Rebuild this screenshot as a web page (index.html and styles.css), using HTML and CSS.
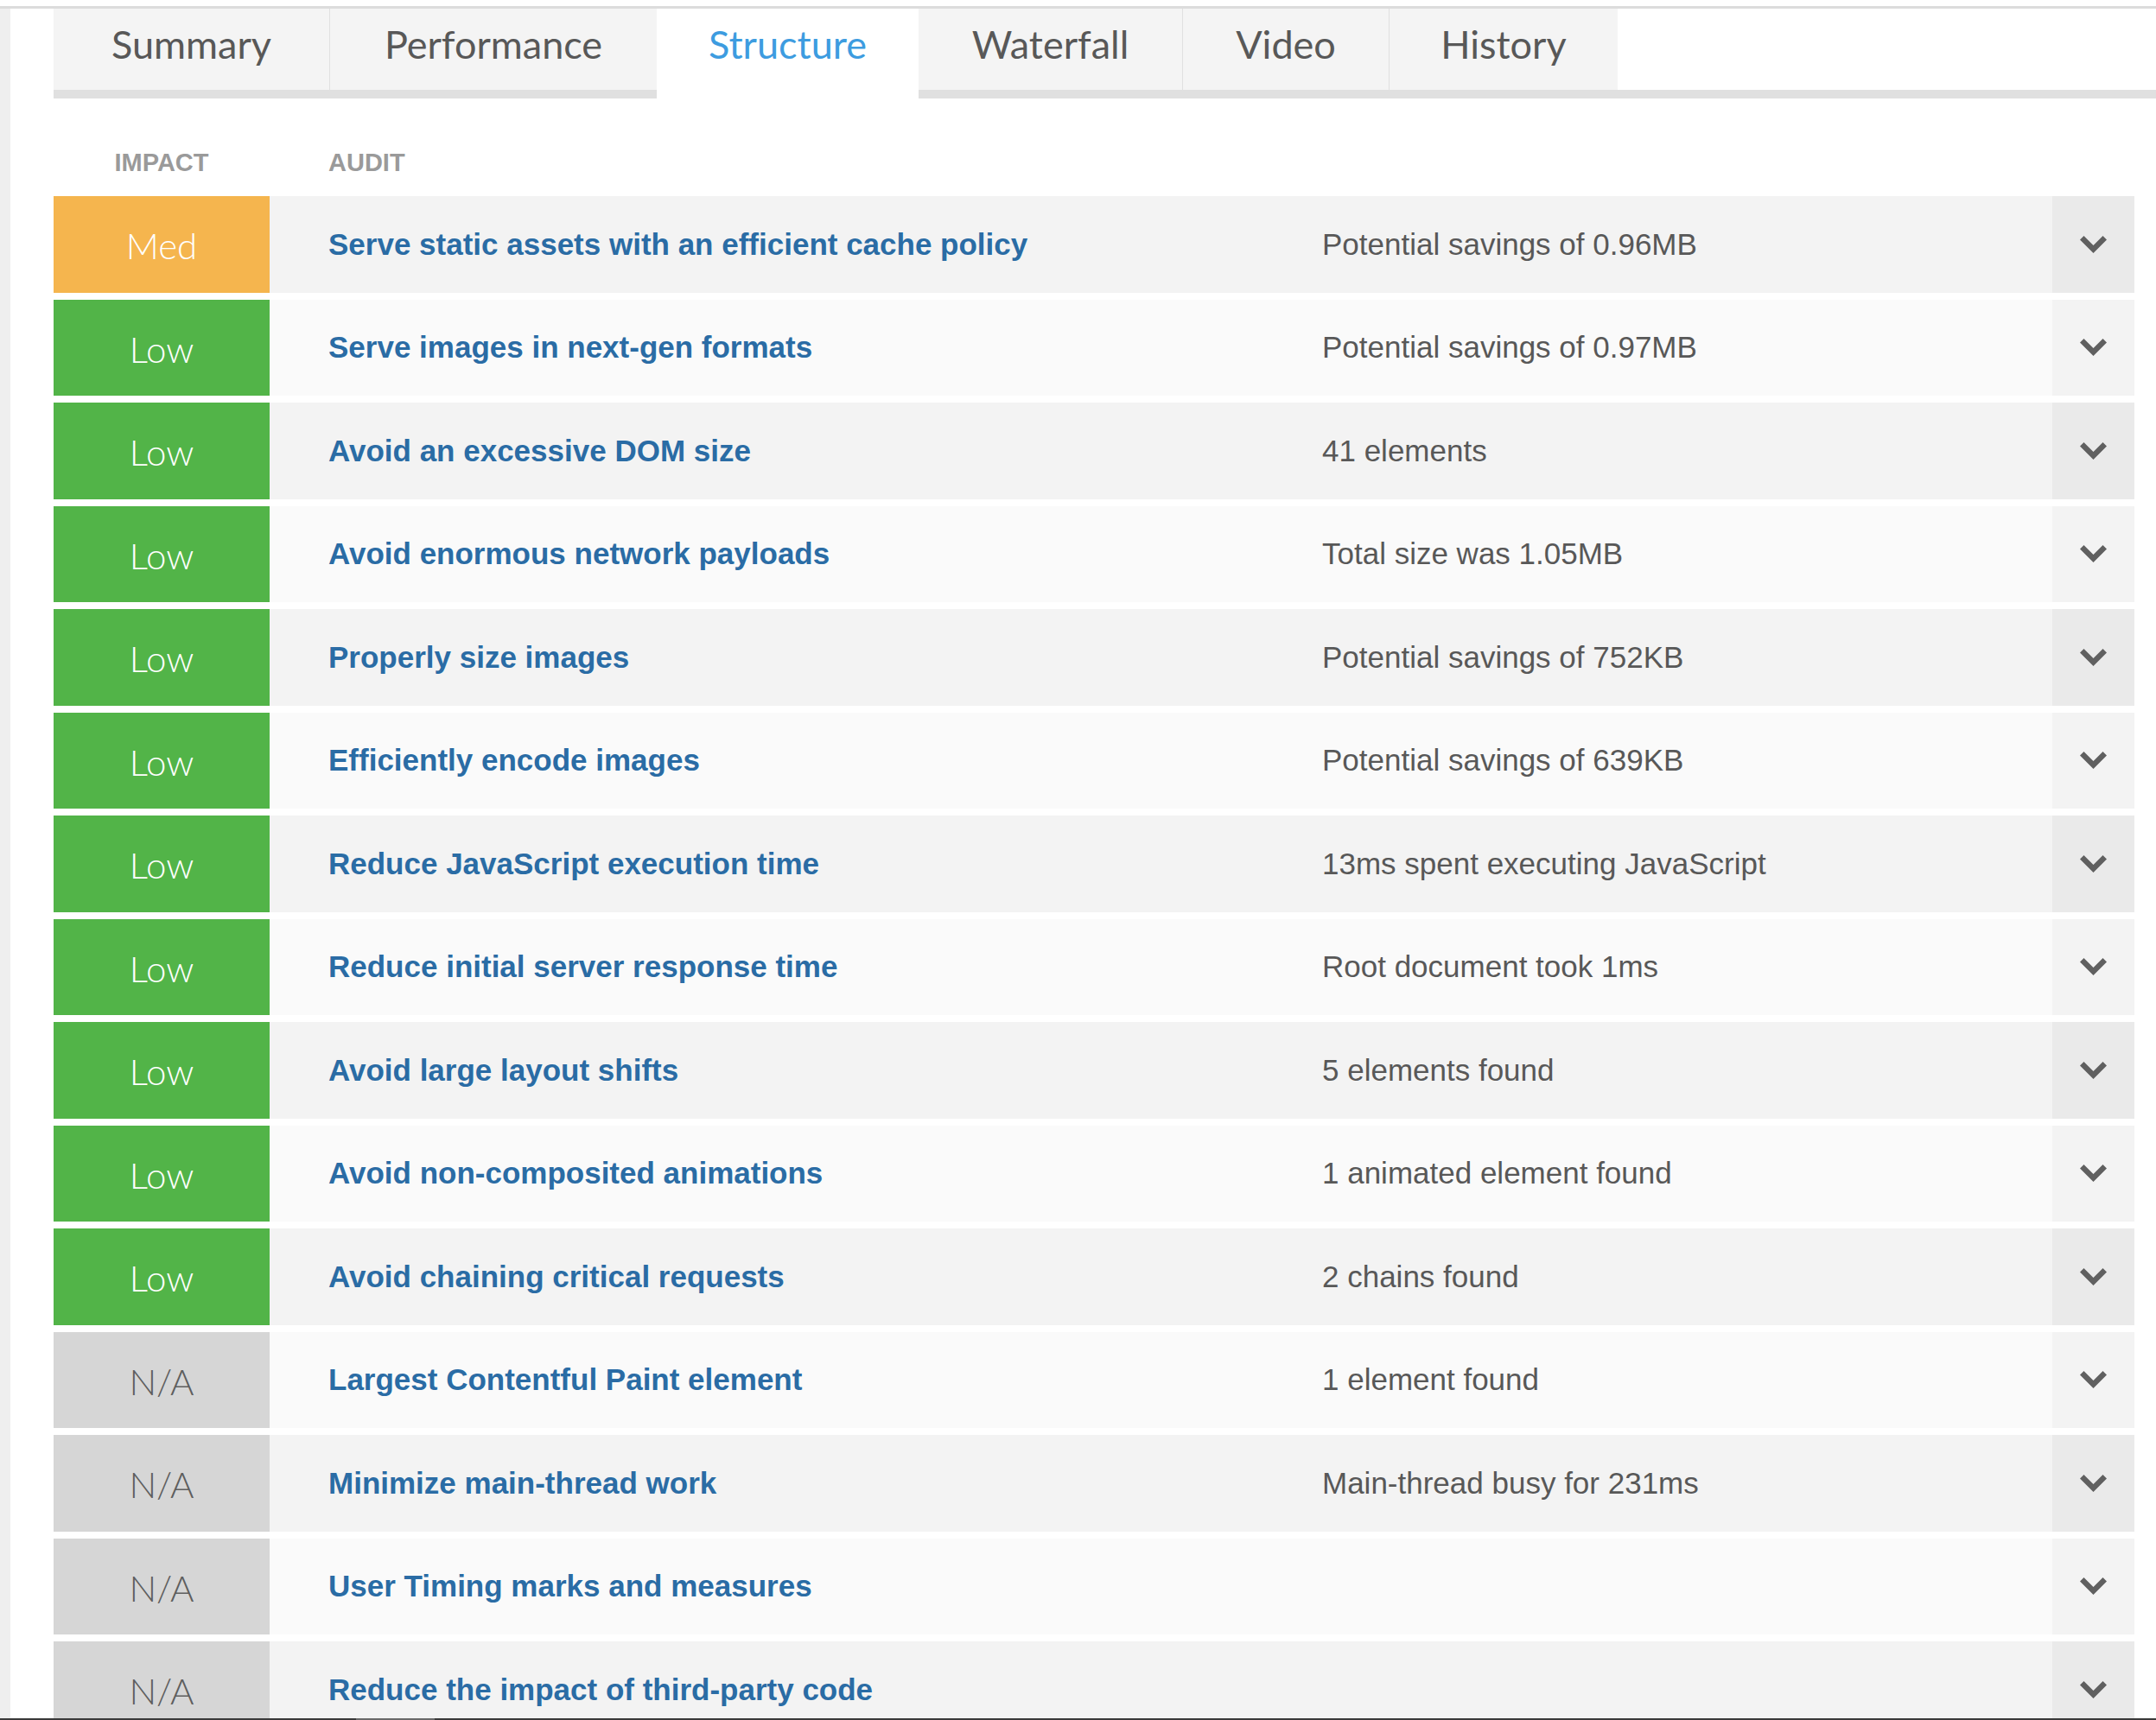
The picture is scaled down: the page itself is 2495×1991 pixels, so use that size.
FILE: index.html
```html
<!DOCTYPE html>
<html lang="en">
<head>
<meta charset="utf-8">
<title>Structure</title>
<link rel="stylesheet" href="styles.css">
</head>
<body>
<div class="topline"></div>
<div class="page">
  <div class="rail"></div>
  <main class="main">
    <nav class="tabs">
      <a class="tab tab-summary">Summary</a>
      <a class="tab tab-performance">Performance</a>
      <a class="tab tab-structure active">Structure</a>
      <a class="tab tab-waterfall">Waterfall</a>
      <a class="tab tab-video">Video</a>
      <a class="tab tab-history">History</a>
    </nav>
    <div class="audits">
      <div class="head">
        <div class="head-impact">IMPACT</div>
        <div class="head-audit">AUDIT</div>
      </div>
      <div class="audit odd"><div class="impact med">Med</div><div class="name">Serve static assets with an efficient cache policy</div><div class="detail">Potential savings of 0.96MB</div><div class="toggle"><svg class="chev" viewBox="0 0 31 20"><polygon points="0,4.5 4.5,0 15.5,11 26.5,0 31,4.5 15.5,20"/></svg></div></div>
      <div class="audit even"><div class="impact low">Low</div><div class="name">Serve images in next-gen formats</div><div class="detail">Potential savings of 0.97MB</div><div class="toggle"><svg class="chev" viewBox="0 0 31 20"><polygon points="0,4.5 4.5,0 15.5,11 26.5,0 31,4.5 15.5,20"/></svg></div></div>
      <div class="audit odd"><div class="impact low">Low</div><div class="name">Avoid an excessive DOM size</div><div class="detail">41 elements</div><div class="toggle"><svg class="chev" viewBox="0 0 31 20"><polygon points="0,4.5 4.5,0 15.5,11 26.5,0 31,4.5 15.5,20"/></svg></div></div>
      <div class="audit even"><div class="impact low">Low</div><div class="name">Avoid enormous network payloads</div><div class="detail">Total size was 1.05MB</div><div class="toggle"><svg class="chev" viewBox="0 0 31 20"><polygon points="0,4.5 4.5,0 15.5,11 26.5,0 31,4.5 15.5,20"/></svg></div></div>
      <div class="audit odd"><div class="impact low">Low</div><div class="name">Properly size images</div><div class="detail">Potential savings of 752KB</div><div class="toggle"><svg class="chev" viewBox="0 0 31 20"><polygon points="0,4.5 4.5,0 15.5,11 26.5,0 31,4.5 15.5,20"/></svg></div></div>
      <div class="audit even"><div class="impact low">Low</div><div class="name">Efficiently encode images</div><div class="detail">Potential savings of 639KB</div><div class="toggle"><svg class="chev" viewBox="0 0 31 20"><polygon points="0,4.5 4.5,0 15.5,11 26.5,0 31,4.5 15.5,20"/></svg></div></div>
      <div class="audit odd"><div class="impact low">Low</div><div class="name">Reduce JavaScript execution time</div><div class="detail">13ms spent executing JavaScript</div><div class="toggle"><svg class="chev" viewBox="0 0 31 20"><polygon points="0,4.5 4.5,0 15.5,11 26.5,0 31,4.5 15.5,20"/></svg></div></div>
      <div class="audit even"><div class="impact low">Low</div><div class="name">Reduce initial server response time</div><div class="detail">Root document took 1ms</div><div class="toggle"><svg class="chev" viewBox="0 0 31 20"><polygon points="0,4.5 4.5,0 15.5,11 26.5,0 31,4.5 15.5,20"/></svg></div></div>
      <div class="audit odd"><div class="impact low">Low</div><div class="name">Avoid large layout shifts</div><div class="detail">5 elements found</div><div class="toggle"><svg class="chev" viewBox="0 0 31 20"><polygon points="0,4.5 4.5,0 15.5,11 26.5,0 31,4.5 15.5,20"/></svg></div></div>
      <div class="audit even"><div class="impact low">Low</div><div class="name">Avoid non-composited animations</div><div class="detail">1 animated element found</div><div class="toggle"><svg class="chev" viewBox="0 0 31 20"><polygon points="0,4.5 4.5,0 15.5,11 26.5,0 31,4.5 15.5,20"/></svg></div></div>
      <div class="audit odd"><div class="impact low">Low</div><div class="name">Avoid chaining critical requests</div><div class="detail">2 chains found</div><div class="toggle"><svg class="chev" viewBox="0 0 31 20"><polygon points="0,4.5 4.5,0 15.5,11 26.5,0 31,4.5 15.5,20"/></svg></div></div>
      <div class="audit even"><div class="impact na">N/A</div><div class="name">Largest Contentful Paint element</div><div class="detail">1 element found</div><div class="toggle"><svg class="chev" viewBox="0 0 31 20"><polygon points="0,4.5 4.5,0 15.5,11 26.5,0 31,4.5 15.5,20"/></svg></div></div>
      <div class="audit odd"><div class="impact na">N/A</div><div class="name">Minimize main-thread work</div><div class="detail">Main-thread busy for 231ms</div><div class="toggle"><svg class="chev" viewBox="0 0 31 20"><polygon points="0,4.5 4.5,0 15.5,11 26.5,0 31,4.5 15.5,20"/></svg></div></div>
      <div class="audit even"><div class="impact na">N/A</div><div class="name">User Timing marks and measures</div><div class="detail"></div><div class="toggle"><svg class="chev" viewBox="0 0 31 20"><polygon points="0,4.5 4.5,0 15.5,11 26.5,0 31,4.5 15.5,20"/></svg></div></div>
      <div class="audit odd"><div class="impact na">N/A</div><div class="name">Reduce the impact of third-party code</div><div class="detail"></div><div class="toggle"><svg class="chev" viewBox="0 0 31 20"><polygon points="0,4.5 4.5,0 15.5,11 26.5,0 31,4.5 15.5,20"/></svg></div></div>
    </div>
  </main>
</div>
<div class="hscroll"><div class="hscroll-thumb"></div></div>
</body>
</html>
```
FILE: styles.css
```css
html, body {
  margin: 0;
  padding: 0;
  overflow: hidden;
  height: 100%;
  background: #fff;
}
body {
  font-family: "Liberation Sans", Arial, sans-serif;
}
.topline {
  margin-top: 7px;
  height: 3px;
  background: #dcdcdc;
}
.page {
  display: flex;
  min-height: 100%;
}
.rail {
  width: 12px;
  flex: none;
  background: #efefef;
}
.main {
  flex: 1;
  padding-left: 50px;
}
.tabs {
  display: flex;
  height: 94px;
  border-bottom: 10px solid #e0e0e0;
}
.tab {
  display: flex;
  align-items: center;
  justify-content: center;
  box-sizing: border-box;
  padding: 0 0 12px;
  background: #f4f4f4;
  border-left: 1px solid #e0e0e0;
  font-family: Lato, "Open Sans", sans-serif;
  font-size: 45px;
  color: #585858;
  white-space: nowrap;
  cursor: pointer;
}
.tab-summary { width: 319px; border-left: none; }
.tab-performance { width: 379px; }
.tab-structure { width: 303px; }
.tab-waterfall { width: 305px; border-left: none; }
.tab-video { width: 239px; }
.tab-history { width: 265px; }
.tab.active {
  background: #fff;
  color: #3d9ce0;
  height: 104px;
  margin-bottom: -10px;
  padding-bottom: 22px;
  border-left: none;
}
.audits {
  margin-right: 25px;
}
.head {
  display: flex;
  height: 113px;
  box-sizing: border-box;
  padding-top: 60px;
  font-size: 29px;
  line-height: 29px;
  font-weight: bold;
  color: #9a9a9a;
}
.head-impact {
  width: 250px;
  text-align: center;
}
.head-audit {
  padding-left: 68px;
}
.audit {
  display: flex;
  height: 111.5px;
  margin-bottom: 8px;
  font-size: 35px;
}
.audit.odd { background: #f3f3f3; }
.audit.even { background: #fafafa; }
.impact {
  width: 250px;
  flex: none;
  display: flex;
  align-items: center;
  justify-content: center;
  padding-top: 3px;
  box-sizing: border-box;
  font-family: Lato, "Open Sans", sans-serif;
  font-weight: 300;
  font-size: 42px;
  color: #fff;
}
.impact.med { background: #f5b54e; }
.impact.low { background: #52b448; }
.impact.na { background: #d6d6d6; color: #5e5e5e; }
.name {
  width: 1218px;
  flex: none;
  box-sizing: border-box;
  padding-left: 68px;
  display: flex;
  align-items: center;
  font-weight: bold;
  color: #2a6ca5;
}
.detail {
  flex: 1;
  display: flex;
  align-items: center;
  color: #585858;
}
.toggle {
  width: 95px;
  flex: none;
  display: flex;
  align-items: center;
  justify-content: center;
}
.audit.odd .toggle { background: #eaeaea; }
.audit.even .toggle { background: #f3f3f3; }
.chev {
  width: 31px;
  height: 20px;
  fill: #606060;
}
.hscroll {
  position: fixed;
  left: 0;
  right: 0;
  bottom: 0;
  height: 2px;
  background: #3a3a3a;
}
.hscroll-thumb {
  margin-left: 412px;
  width: 91px;
  height: 2px;
  background: #6a6a6a;
}
```
